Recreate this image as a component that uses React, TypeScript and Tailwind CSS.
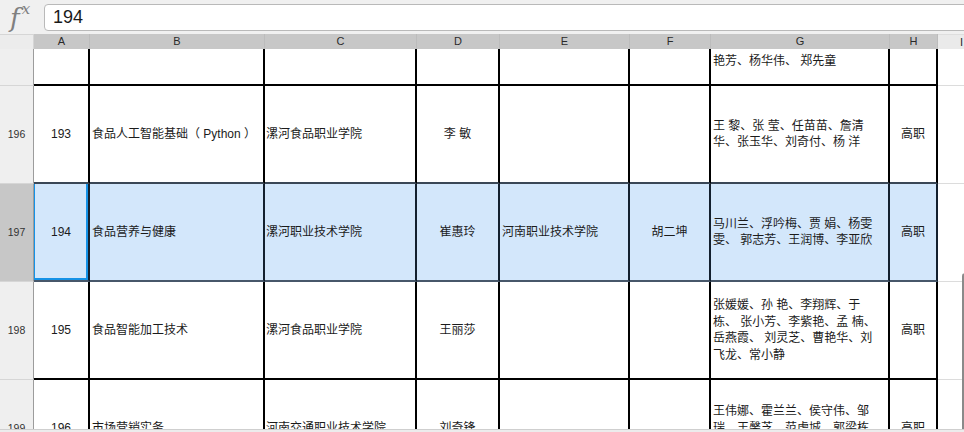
import React from "react";

type Row = {
  num: number;
  a: string;
  b: string;
  c: string;
  d: string;
  e: string;
  f: string;
  g: string[];
  h: string;
};

const ROWS: Row[] = [
  {
    num: 195,
    a: "192",
    b: "",
    c: "",
    d: "",
    e: "",
    f: "",
    g: ["王丽娟、陈 磊、赵晓燕、孙", "丽、周 敏、吴建华、黄", "俊、刘 红、徐文静、高", "艳芳、杨华伟、 郑先童"],
    h: "",
  },
  {
    num: 196,
    a: "193",
    b: "食品人工智能基础（ Python ）",
    c: "漯河食品职业学院",
    d: "李 敏",
    e: "",
    f: "",
    g: ["王 黎、张 莹、任苗苗、詹清", "华、张玉华、刘奇付、杨 洋"],
    h: "高职",
  },
  {
    num: 197,
    a: "194",
    b: "食品营养与健康",
    c: "漯河职业技术学院",
    d: "崔惠玲",
    e: "河南职业技术学院",
    f: "胡二坤",
    g: ["马川兰、浮吟梅、贾 娟、杨雯", "雯、 郭志芳、王润博、李亚欣"],
    h: "高职",
  },
  {
    num: 198,
    a: "195",
    b: "食品智能加工技术",
    c: "漯河食品职业学院",
    d: "王丽莎",
    e: "",
    f: "",
    g: ["张媛媛、孙 艳、李翔辉、于", "栋、 张小芳、李紫艳、孟 楠、", "岳燕霞、 刘灵芝、曹艳华、刘", "飞龙、常小静"],
    h: "高职",
  },
  {
    num: 199,
    a: "196",
    b: "市场营销实务",
    c: "河南交通职业技术学院",
    d: "刘奇锋",
    e: "",
    f: "",
    g: ["王伟娜、霍兰兰、侯守伟、邹", "瑞、王馨芝、范虎城、郭梁栋", "张 静、李 强"],
    h: "高职",
  },
];

const SELECTED = 197;
const FONT = "font-['Liberation_Sans','Noto_Sans_CJK_SC',sans-serif]";
const GRID =
  "grid grid-cols-[34px_56px_175px_152px_83px_130px_81px_179px_48px_50px]";

function FormulaBar() {
  return (
    <div className="flex h-[34px] items-start bg-[#f0f0f0] pt-[4px]">
      <div className="flex h-[27px] w-[44px] shrink-0 items-start pl-[10px] font-['DejaVu_Serif',serif] italic text-[#808080]">
        <span className="mt-[1px] text-[26px] leading-[26px]">f</span>
        <span className="-mt-[2px] ml-[2px] text-[15px] leading-[15px]">x</span>
      </div>
      <div
        className={`-mr-[8px] flex h-[27px] flex-1 items-center rounded-[4px] border border-[#b9b9b9] bg-white pl-[8px] text-[18px] text-[#1a1a1a] ${FONT}`}
      >
        194
      </div>
    </div>
  );
}

function ColumnHeader() {
  const letters = ["A", "B", "C", "D", "E", "F", "G", "H"];
  return (
    <div className={`${GRID} h-[15px] text-[11px] leading-[15px] text-[#2a2a2a] ${FONT}`}>
      <div className="border-r border-t border-[#d6d6d6] bg-[#ececec]" />
      {letters.map((l) => (
        <div key={l} className="border-r border-[#bcbcbc] bg-[#c7c7c7] text-center">
          {l}
        </div>
      ))}
      <div className="border-t border-[#dedede] bg-[#eaeaea] pl-[22px]">I</div>
    </div>
  );
}

function SheetRow({ row, first }: { row: Row; first?: boolean }) {
  const sel = row.num === SELECTED;
  const line = sel ? "border-[#13202e]" : "border-black";
  const bottom = sel
    ? "border-b-[#47576a]"
    : row.num === SELECTED - 1
      ? "border-b-[#3a4756]"
      : "border-b-black";
  const fill = sel ? "bg-[#d3e7fb]" : "bg-white";
  const cell = `border-r-2 border-b-2 ${line} ${bottom} ${fill} flex items-center overflow-hidden`;

  return (
    <div
      className={`${GRID} h-[98px] text-[12px] text-[#1b1b1b] ${FONT} ${first ? "-mt-[61px]" : ""}`}
    >
      <div
        className={`flex items-center justify-center border-r border-b border-r-[#9c9c9c] border-b-[#d6d6d6] text-[10.5px] text-[#333] ${
          sel ? "bg-[#c7c7c7]" : "bg-[#efefef]"
        }`}
      >
        {row.num}
      </div>
      <div className={`${cell} relative justify-center`}>
        {row.a}
        {sel && (
          <div className="absolute -left-[1px] -top-[2px] bottom-0 right-0 border-2 border-[#1592e6]" />
        )}
      </div>
      <div className={`${cell} whitespace-pre pl-[2px]`}>{row.b}</div>
      <div className={`${cell} whitespace-nowrap pl-[1px]`}>{row.c}</div>
      <div className={`${cell} justify-center whitespace-pre`}>{row.d}</div>
      <div className={`${cell} whitespace-nowrap pl-[2px]`}>{row.e}</div>
      <div className={`${cell} justify-center`}>{row.f}</div>
      <div className={`${cell} pl-[2px]`}>
        <div className="flex flex-col leading-[16.5px]">
          {row.g.map((t, i) => (
            <div key={i} className="whitespace-pre">
              {t}
            </div>
          ))}
        </div>
      </div>
      <div className={`${cell} justify-center`}>{row.h}</div>
      <div className="border-b border-[#dcdcdc] bg-white" />
    </div>
  );
}

export default function App() {
  return (
    <div className="relative h-[432px] w-[964px] overflow-hidden bg-white">
      <FormulaBar />
      <ColumnHeader />
      <div className="h-[383px] overflow-hidden">
        {ROWS.map((r, i) => (
          <SheetRow key={r.num} row={r} first={i === 0} />
        ))}
      </div>
      {/* docked side panel edge */}
      <div className="absolute bottom-0 left-[962px] top-[273px] w-[8px] rounded-tl-[3px] border-l-2 border-t border-l-[#8a8a8a] border-t-[#bdbdbd] bg-[#f4f4f4]" />
      {/* horizontal scrollbar track */}
      <div className="absolute bottom-0 left-0 right-0 h-[3px] border-t border-[#cfcfcf] bg-[#ececec]" />
    </div>
  );
}
